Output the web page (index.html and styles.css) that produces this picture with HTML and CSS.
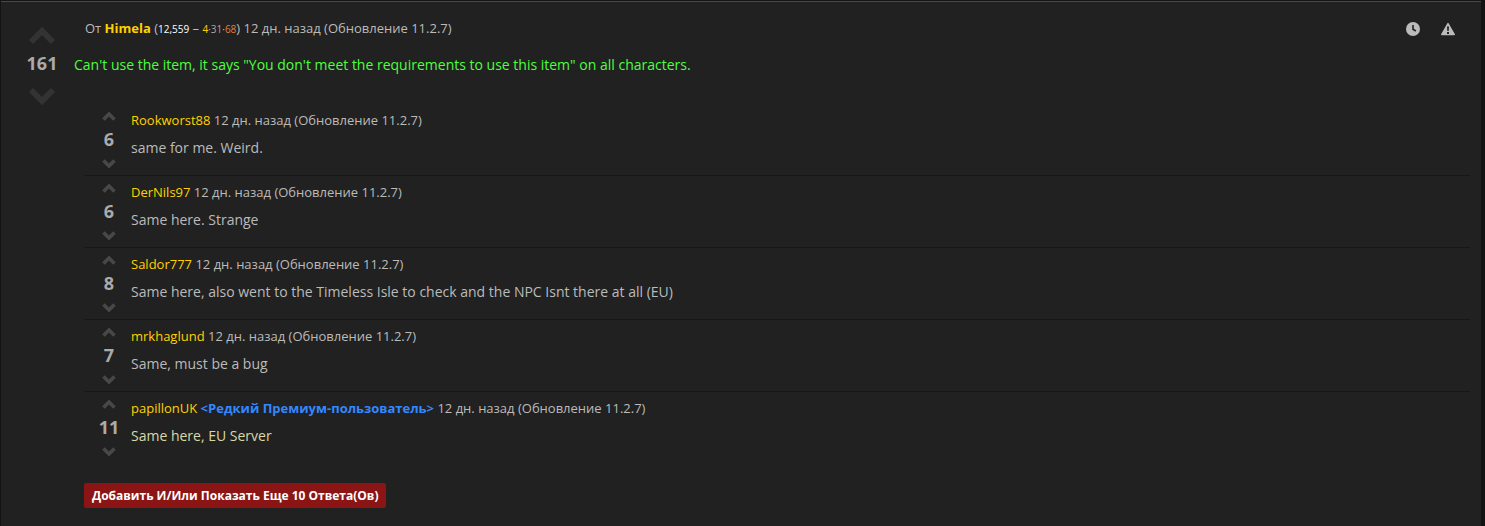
FILE: index.html
```html
<!DOCTYPE html>
<html lang="ru">
<head>
  <meta charset="UTF-8">
  <meta name="viewport" content="width=device-width, initial-scale=1.0">
  <title>Комментарии</title>
  <link rel="stylesheet" href="styles.css">
</head>
<body>

<svg class="sprite" aria-hidden="true">
  <symbol id="up" viewBox="0 0 28 18">
    <path d="M3 15 L14 4 L25 15" fill="none" stroke="currentColor"/>
  </symbol>
  <symbol id="down" viewBox="0 0 28 18">
    <path d="M3 3 L14 14 L25 3" fill="none" stroke="currentColor"/>
  </symbol>
</svg>

<article class="comment">
  <div class="vote">
    <button type="button" aria-label="За"><svg><use href="#up"/></svg></button>
    <span class="rating">161</span>
    <button type="button" aria-label="Против"><svg><use href="#down"/></svg></button>
  </div>

  <div class="content">
    <header class="comment-head">
      <div class="meta">От <a href="#" class="user main-user">Himela</a> (<small class="points">12,559</small> – <small><span class="gold">4</span>·<span class="silver">31</span>·<span class="copper">68</span></small>) 12 дн. назад (Обновление 11.2.7)</div>
      <div class="tools">
        <button type="button" aria-label="История">
          <svg viewBox="0 0 14 14"><circle cx="7" cy="7" r="7" fill="currentColor"/><path d="M7 3 V7.3 L9.8 9" fill="none" stroke="#212121" stroke-width="1.6"/></svg>
        </button>
        <button type="button" aria-label="Пожаловаться">
          <svg viewBox="0 0 14 14"><path d="M7 1.5 L13.3 12.5 H0.7 Z" fill="currentColor" stroke="currentColor" stroke-width="1.4" stroke-linejoin="round"/><path d="M6 4.5 H8 L7.7 9 H6.3 Z M6 10 H8 V12 H6 Z" fill="#212121"/></svg>
        </button>
      </div>
    </header>

    <p class="comment-text">Can't use the item, it says "You don't meet the requirements to use this item" on all characters.</p>

    <ul class="replies">
      <li class="reply">
        <div class="vote">
          <button type="button" aria-label="За"><svg><use href="#up"/></svg></button>
          <span class="rating">6</span>
          <button type="button" aria-label="Против"><svg><use href="#down"/></svg></button>
        </div>
        <div class="reply-body">
          <div class="meta"><a href="#" class="user">Rookworst88</a> 12 дн. назад (Обновление 11.2.7)</div>
          <p>same for me. Weird.</p>
        </div>
      </li>
      <li class="reply">
        <div class="vote">
          <button type="button" aria-label="За"><svg><use href="#up"/></svg></button>
          <span class="rating">6</span>
          <button type="button" aria-label="Против"><svg><use href="#down"/></svg></button>
        </div>
        <div class="reply-body">
          <div class="meta"><a href="#" class="user">DerNils97</a> 12 дн. назад (Обновление 11.2.7)</div>
          <p>Same here. Strange</p>
        </div>
      </li>
      <li class="reply">
        <div class="vote">
          <button type="button" aria-label="За"><svg><use href="#up"/></svg></button>
          <span class="rating">8</span>
          <button type="button" aria-label="Против"><svg><use href="#down"/></svg></button>
        </div>
        <div class="reply-body">
          <div class="meta"><a href="#" class="user">Saldor777</a> 12 дн. назад (Обновление 11.2.7)</div>
          <p>Same here, also went to the Timeless Isle to check and the NPC Isnt there at all (EU)</p>
        </div>
      </li>
      <li class="reply">
        <div class="vote">
          <button type="button" aria-label="За"><svg><use href="#up"/></svg></button>
          <span class="rating">7</span>
          <button type="button" aria-label="Против"><svg><use href="#down"/></svg></button>
        </div>
        <div class="reply-body">
          <div class="meta"><a href="#" class="user">mrkhaglund</a> 12 дн. назад (Обновление 11.2.7)</div>
          <p>Same, must be a bug</p>
        </div>
      </li>
      <li class="reply premium">
        <div class="vote">
          <button type="button" aria-label="За"><svg><use href="#up"/></svg></button>
          <span class="rating">11</span>
          <button type="button" aria-label="Против"><svg><use href="#down"/></svg></button>
        </div>
        <div class="reply-body">
          <div class="meta"><a href="#" class="user">papillonUK</a> <a href="#" class="title">&lt;Редкий Премиум-пользователь&gt;</a> 12 дн. назад (Обновление 11.2.7)</div>
          <p>Same here, EU Server</p>
        </div>
      </li>
    </ul>

    <button type="button" class="more">Добавить И/Или Показать Еще 10 Ответа(Ов)</button>
  </div>
</article>

</body>
</html>
```
FILE: styles.css
```css
* {
  box-sizing: border-box;
}

body {
  margin: 0;
  padding: 1px 4px 0 1px;
  background: #131313;
  color: #bbb;
  font: 13px/20px "Open Sans", "Noto Sans", sans-serif;
}

a {
  text-decoration: none;
}

p {
  margin: 0;
}

button {
  padding: 0;
  border: 0;
  background: none;
  color: inherit;
  font: inherit;
  cursor: pointer;
}

svg {
  display: block;
}

.sprite {
  position: absolute;
  width: 0;
  height: 0;
}

.comment {
  display: flex;
  min-height: calc(100vh - 1px);
  padding: 16px 11px 16px 23px;
  border-top: 1px solid #484848;
  background: #212121;
}

/* voting arrows */
.vote {
  display: flex;
  flex-direction: column;
  align-items: center;
  flex: none;
  width: 36px;
  margin-right: 14px;
  padding-top: 9px;
  color: #333;
}

.vote svg {
  width: 28px;
  height: 18px;
  stroke-width: 6px;
}

.rating {
  margin: 6px 0 12px;
  line-height: 24px;
  font-size: 18px;
  font-weight: bold;
  color: #aaa;
}

.content {
  flex: 1;
}

.comment-head {
  display: flex;
  justify-content: space-between;
  padding: 0 15px 0 11px;
}

.meta small {
  font-size: 10px;
}

.user {
  color: #ffd100;
}

.main-user {
  font-weight: bold;
}

.title {
  color: #3388ff;
  font-weight: bold;
}

.meta .points { color: #fff; }
.gold { color: #ffd100; }
.silver { color: #a8a8a8; }
.copper { color: #e08038; }

.tools {
  display: flex;
  align-items: center;
  gap: 21px;
}

.tools svg {
  width: 14px;
  height: 14px;
}

.comment-text {
  margin-top: 15px;
  font-size: 14px;
  line-height: 22px;
  color: #4dff3d;
}

/* replies */
.replies {
  margin: 28px 0 20px 10px;
  padding: 0;
  list-style: none;
}

.reply {
  display: flex;
  padding: 6px 0 7px;
  border-bottom: 1px solid #171717;
}

.reply:last-child {
  border-bottom: 0;
}

.reply .vote {
  width: 47px;
  margin: 0;
  padding: 2px 0 0 3px;
  color: #484848;
}

.reply .vote svg {
  width: 14px;
  height: 9px;
  stroke-width: 7px;
}

.reply .rating {
  margin: 6px 0 8px;
}

.reply p {
  margin-top: 8px;
  font-size: 14px;
}

.premium p {
  color: #d8d8a8;
}

.more {
  height: 25px;
  margin-left: 10px;
  padding: 0 8px;
  border-radius: 2px;
  background: #8b1515;
  color: #fff;
  font-size: 12px;
  font-weight: bold;
}
```
